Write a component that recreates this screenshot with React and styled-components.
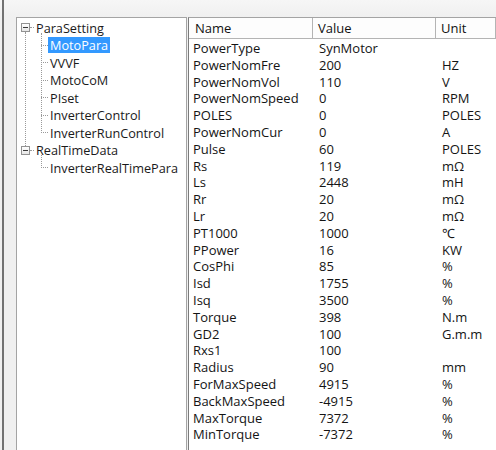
// 파라미터 설정 화면: 왼쪽은 트리 메뉴, 오른쪽은 선택된 항목(MotoPara)의 값 목록
import React from 'react';
import styled, { createGlobalStyle } from 'styled-components';

const GlobalStyle = createGlobalStyle`
  html, body {
    margin: 0;
    padding: 0;
    background: #f0f0f0;
  }
  body {
    font-family: 'Open Sans', 'Noto Sans', 'Noto Sans CJK SC', sans-serif;
    font-size: 13px;
    color: #111;
  }
`;

export const Window = styled.div`
  width: 496px;
  height: 450px;
  overflow: hidden;
  display: flex;
  background: linear-gradient(#f6f6f6, #f0f0f0 17px);
`;

export const Frame = styled.div`
  flex: 1;
  display: flex;
  margin-left: 2px;
  border-left: 2px solid #727272;
  padding: 17px 0 0 12px;
  min-width: 0;
`;

export const TreePanel = styled.div`
  box-sizing: border-box;
  width: 171px;
  flex-shrink: 0;
  background: #fff;
  border: 1px solid #a4a4a4;
  border-bottom: none;
  padding-top: 1px;
  font-size: 12.7px;
`;

export const TreeNode = styled.div`
  position: relative;

  &::before {
    content: '';
    display: ${(props) => (props.$hasNext ? 'block' : 'none')};
    position: absolute;
    left: 8px;
    top: 13px;
    bottom: -4.5px;
    border-left: 1px dotted #9a9a9a;
  }
`;

export const TreeRow = styled.div`
  display: flex;
  align-items: center;
  height: 17.5px;
  white-space: nowrap;
`;

export const Expander = styled.span`
  box-sizing: border-box;
  width: 9px;
  height: 9px;
  margin-left: 4px;
  border: 1px solid #929292;
  background: linear-gradient(#fff, #e6e6e6);
  display: flex;
  align-items: center;
  justify-content: center;

  &::after {
    content: '';
    width: 5px;
    height: 1px;
    background: #3a3a3a;
  }
`;

export const Connector = styled.span`
  width: ${(props) => props.$width}px;
  height: 0;
  border-top: 1px dotted #9a9a9a;
`;

export const Label = styled.span`
  display: inline-flex;
  align-items: center;
  height: 16px;
  padding: 0 2px;
  color: ${(props) => (props.$selected ? '#fff' : '#1a1a1a')};
  background: ${(props) => (props.$selected ? '#3399ff' : 'transparent')};
`;

export const ChildList = styled.div`
  position: relative;
  margin-left: 24px;

  &::before {
    content: '';
    position: absolute;
    left: 0;
    top: -4px;
    bottom: 8.75px;
    border-left: 1px dotted #9a9a9a;
  }
`;

export const TablePanel = styled.div`
  flex: 1;
  margin-left: 1px;
  background: #fff;
  border-left: 1px solid #7c7c7c;
  border-top: 1px solid #a4a4a4;
  min-width: 0;
`;

export const Grid = styled.div`
  display: grid;
  grid-template-columns: 124px 123px 1fr;
`;

export const HeadCell = styled.div`
  height: 20px;
  display: flex;
  align-items: center;
  padding-left: ${(props) => props.$pad}px;
  background: #fdfdfd;
  border-right: 1px solid #b4b4b4;
  border-bottom: 1px solid #b4b4b4;
  white-space: nowrap;
`;

export const Cell = styled.div`
  height: 16.8px;
  line-height: 16.8px;
  padding-left: ${(props) => props.$pad}px;
  white-space: nowrap;
  color: #141414;
`;

export const Spacer = styled.div`
  grid-column: 1 / -1;
  height: 1px;
`;

const treeData = [
  {
    name: 'ParaSetting',
    children: ['MotoPara', 'VVVF', 'MotoCoM', 'PIset', 'InverterControl', 'InverterRunControl'],
  },
  {
    name: 'RealTimeData',
    children: ['InverterRealTimePara'],
  },
];

const rows = [
  ['PowerType', 'SynMotor', ''],
  ['PowerNomFre', '200', 'HZ'],
  ['PowerNomVol', '110', 'V'],
  ['PowerNomSpeed', '0', 'RPM'],
  ['POLES', '0', 'POLES'],
  ['PowerNomCur', '0', 'A'],
  ['Pulse', '60', 'POLES'],
  ['Rs', '119', 'mΩ'],
  ['Ls', '2448', 'mH'],
  ['Rr', '20', 'mΩ'],
  ['Lr', '20', 'mΩ'],
  ['PT1000', '1000', '℃'],
  ['PPower', '16', 'KW'],
  ['CosPhi', '85', '%'],
  ['Isd', '1755', '%'],
  ['Isq', '3500', '%'],
  ['Torque', '398', 'N.m'],
  ['GD2', '100', 'G.m.m'],
  ['Rxs1', '100', ''],
  ['Radius', '90', 'mm'],
  ['ForMaxSpeed', '4915', '%'],
  ['BackMaxSpeed', '-4915', '%'],
  ['MaxTorque', '7372', '%'],
  ['MinTorque', '-7372', '%'],
];

const App = () => {
  const selected = 'MotoPara';

  return (
    <>
      <GlobalStyle />
      <Window>
        <Frame>
          <TreePanel>
            {treeData.map((node, i) => (
              <TreeNode key={node.name} $hasNext={i < treeData.length - 1}>
                <TreeRow>
                  <Expander />
                  <Connector $width={4} />
                  <Label>{node.name}</Label>
                </TreeRow>
                <ChildList>
                  {node.children.map((child) => (
                    <TreeRow key={child}>
                      <Connector $width={7} />
                      <Label $selected={child === selected}>{child}</Label>
                    </TreeRow>
                  ))}
                </ChildList>
              </TreeNode>
            ))}
          </TreePanel>
          <TablePanel>
            <Grid>
              <HeadCell $pad={6}>Name</HeadCell>
              <HeadCell $pad={5}>Value</HeadCell>
              <HeadCell $pad={5}>Unit</HeadCell>
              <Spacer />
              {rows.map((row) => (
                <React.Fragment key={row[0]}>
                  <Cell $pad={4}>{row[0]}</Cell>
                  <Cell $pad={6}>{row[1]}</Cell>
                  <Cell $pad={6}>{row[2]}</Cell>
                </React.Fragment>
              ))}
            </Grid>
          </TablePanel>
        </Frame>
      </Window>
    </>
  );
};

export default App;
